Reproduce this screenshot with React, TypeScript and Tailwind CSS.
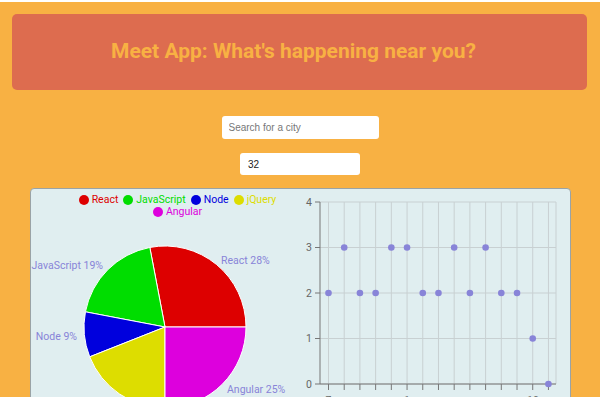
import React from 'react'

const slices = [
  { name: 'React', value: 28, color: '#dd0000' },
  { name: 'JavaScript', value: 19, color: '#00dd00' },
  { name: 'Node', value: 9, color: '#0000dd' },
  { name: 'jQuery', value: 19, color: '#dddd00' },
  { name: 'Angular', value: 25, color: '#dd00dd' },
]

// label spots measured off the chart (svg coords)
const labels = [
  { text: 'React 28%', x: 190, y: 71, anchor: 'start' },
  { text: 'JavaScript 19%', x: 72, y: 76, anchor: 'end' },
  { text: 'Node 9%', x: 46, y: 147, anchor: 'end' },
  { text: 'jQuery 19%', x: 84, y: 213, anchor: 'end' },
  { text: 'Angular 25%', x: 196, y: 200, anchor: 'start' },
]

const events = [2, 3, 2, 2, 3, 3, 2, 2, 3, 2, 3, 2, 2, 1, 0]

function PieSlices() {
  const cx = 134
  const cy = 138
  const r = 81
  let start = 0
  return (
    <>
      {slices.map((s) => {
        const end = start + (s.value / 100) * 360
        const a0 = (start * Math.PI) / 180
        const a1 = (end * Math.PI) / 180
        const x0 = cx + r * Math.cos(a0)
        const y0 = cy - r * Math.sin(a0)
        const x1 = cx + r * Math.cos(a1)
        const y1 = cy - r * Math.sin(a1)
        start = end
        return (
          <path
            key={s.name}
            d={`M${cx},${cy} L${x0},${y0} A${r},${r} 0 0 0 ${x1},${y1} Z`}
            fill={s.color}
            stroke="#fff"
            strokeWidth={1}
          />
        )
      })}
    </>
  )
}

function Legend() {
  return (
    <div className="flex flex-wrap justify-center gap-x-[5px] pl-[42px] pr-[18px] pt-[5px] text-[10.5px] leading-[12px] font-['Roboto',sans-serif]">
      {slices.map((s) => (
        <div key={s.name} className="flex items-center gap-[3px]">
          <span className="block w-[10px] h-[10px] rounded-full" style={{ background: s.color }} />
          <span style={{ color: s.color }}>{s.name}</span>
        </div>
      ))}
    </div>
  )
}

function EventsPie() {
  return (
    <svg width="270" height="230" className="block">
      <PieSlices />
      {labels.map((l) => (
        <text
          key={l.text}
          x={l.x}
          y={l.y}
          textAnchor={l.anchor as 'start' | 'end'}
          dominantBaseline="central"
          fill="#8884d8"
          fontSize="10.5"
          fontFamily="Roboto, sans-serif"
        >
          {l.text}
        </text>
      ))}
    </svg>
  )
}

function EventsScatter() {
  const xs = events.map((_, i) => 27.5 + i * 15.71)
  const yOf = (v: number) => 195 - v * 45.5
  return (
    <svg width="270" height="230" className="block">
      {/* grid */}
      {[0, 1, 2, 3, 4].map((v) => (
        <line key={'h' + v} x1={19} x2={255} y1={yOf(v)} y2={yOf(v)} stroke="#c8d0d2" strokeWidth={1} />
      ))}
      {[...xs, 255].map((x, i) => (
        <line key={'v' + i} x1={x} x2={x} y1={13} y2={195} stroke="#c8d0d2" strokeWidth={1} />
      ))}
      {/* axes */}
      <line x1={19} x2={19} y1={13} y2={195} stroke="#777" />
      <line x1={19} x2={255} y1={195} y2={195} stroke="#777" />
      {[0, 1, 2, 3, 4].map((v) => (
        <g key={'yt' + v}>
          <line x1={14} x2={19} y1={yOf(v)} y2={yOf(v)} stroke="#777" />
          <text x={11} y={yOf(v)} textAnchor="end" dominantBaseline="central" fontSize="10.5" fill="#666" fontFamily="Roboto, sans-serif">
            {v}
          </text>
        </g>
      ))}
      {xs.map((x, i) => (
        <line key={'xt' + i} x1={x} x2={x} y1={195} y2={201} stroke="#777" />
      ))}
      <text x={27.5} y={215} textAnchor="middle" fontSize="10.5" fill="#666" fontFamily="Roboto, sans-serif">7</text>
      <text x={106} y={215} textAnchor="middle" fontSize="10.5" fill="#666" fontFamily="Roboto, sans-serif">1</text>
      <text x={232} y={215} textAnchor="middle" fontSize="10.5" fill="#666" fontFamily="Roboto, sans-serif">10</text>
      {events.map((v, i) => (
        <circle key={'d' + i} cx={xs[i]} cy={yOf(v)} r={3.3} fill="#8884d8" />
      ))}
    </svg>
  )
}

export default function App() {
  return (
    <div className="w-[600px] h-[400px] bg-white pt-[2px] overflow-hidden">
      <div className="h-[395px] bg-[#f8b143] overflow-hidden flex flex-col items-center">
        <header className="shrink-0 mt-[12px] ml-[12px] mr-[13px] self-stretch h-[76px] rounded-[5px] bg-[#dd6c4f] flex items-center justify-center pr-[12px]">
          <h1 className="text-[#f8b143] text-[21px] font-bold font-['Roboto',sans-serif]">
            Meet App: What's happening near you?
          </h1>
        </header>

        <input
          className="shrink-0 mt-[26px] w-[157px] h-[23px] rounded-[3px] bg-white px-[7px] text-[10px] font-['Liberation_Sans',Arial,sans-serif] text-gray-800 placeholder:text-[#777] outline-none"
          placeholder="Search for a city"
        />
        <input
          className="shrink-0 mt-[14px] w-[120px] h-[22px] rounded-[3px] bg-white px-[8px] text-[10px] font-['Liberation_Sans',Arial,sans-serif] text-[#222] outline-none"
          defaultValue="32"
        />

        <div className="shrink-0 mt-[13px] w-[541px] h-[230px] bg-[#e0eef0] border border-[#9aa3a6] rounded-[4px] overflow-hidden">
          <div className="flex">
            <div className="w-[270px] flex flex-col">
              <div className="h-0">
                <Legend />
              </div>
              <EventsPie />
            </div>
            <EventsScatter />
          </div>
        </div>
      </div>
    </div>
  )
}
